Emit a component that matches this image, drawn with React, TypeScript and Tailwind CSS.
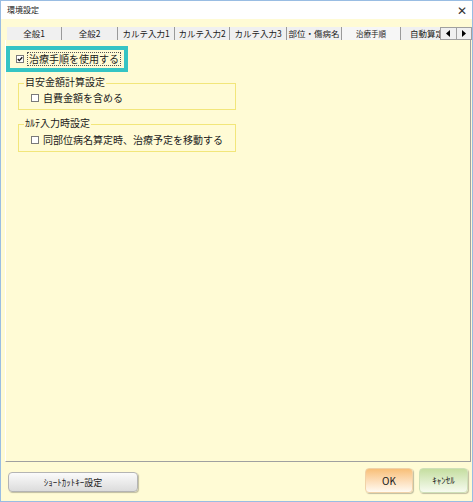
import React from 'react';

const tabs = [
    { label: '全般1', w: 'w-[55px]' },
    { label: '全般2', w: 'w-[56px]' },
    { label: 'カルテ入力1', w: 'w-[57px]' },
    { label: 'カルテ入力2', w: 'w-[55px]' },
    { label: 'カルテ入力3', w: 'w-[57px]' },
    { label: '部位・傷病名', w: 'w-[55px]' },
];

function CheckBox({ checked = false }: { checked?: boolean }) {
    return (
        <span className="w-[8px] h-[8px] border border-[#7a7a7a] bg-white flex items-center justify-center shrink-0">
            {checked && (
                <svg width="6" height="6" viewBox="0 0 6 6">
                    <polyline points="0.8,3 2.3,4.6 5.3,1.2" fill="none" stroke="#111" strokeWidth="1.3" />
                </svg>
            )}
        </span>
    );
}

export default function App() {
    return (
        <div className="w-[473px] h-[502px] border border-[#99bde3] bg-[#fffbd5] flex flex-col overflow-hidden text-[#1a1a1a] font-['Noto_Sans_CJK_JP',sans-serif]">
            {/* Title bar */}
            <div className="h-[18px] bg-white flex items-center justify-between pl-[6px] pr-[5px] shrink-0">
                <span className="text-[8px] leading-none">環境設定</span>
                <span className="text-[12px] leading-none font-light text-[#333]">✕</span>
            </div>

            {/* Tabs */}
            <div className="mt-[8px] h-[13px] flex shrink-0">
                <div className="ml-[6px] flex h-full">
                    {tabs.map((t) => (
                        <div
                            key={t.label}
                            className={`${t.w} h-full bg-[#f0f0f0] border-r border-[#9a9a9a] flex items-center justify-center text-[8.5px] leading-none whitespace-nowrap overflow-hidden`}
                        >
                            {t.label}
                        </div>
                    ))}
                    <div className="w-[59px] h-full bg-[#f6f6f6] border-r border-[#9a9a9a] flex items-center justify-center text-[7.5px] leading-none">
                        治療手順
                    </div>
                    <div className="w-[39px] h-full bg-[#f0f0f0] overflow-hidden flex items-center pl-[9px] text-[8.5px] leading-none whitespace-nowrap">
                        自動算定
                    </div>
                    <div className="w-[32px] h-full flex border border-[#a0a0a0] bg-[#f0f0f0]">
                        <div className="flex-1 flex items-center justify-center border-r border-[#a0a0a0]">
                            <svg width="5" height="7" viewBox="0 0 5 7">
                                <polygon points="4,0 0,3.5 4,7" fill="#000" />
                            </svg>
                        </div>
                        <div className="flex-1 flex items-center justify-center">
                            <svg width="5" height="7" viewBox="0 0 5 7">
                                <polygon points="1,0 5,3.5 1,7" fill="#000" />
                            </svg>
                        </div>
                    </div>
                </div>
            </div>

            {/* Panel */}
            <div className="ml-[4px] w-[466px] h-[422px] shrink-0 border-l border-l-[#ffffff] border-r border-r-[#a0a0a0] border-b border-b-[#a0a0a0] flex flex-col">
                <div className="mt-[6px] w-[122px] h-[26px] border-[4px] border-[#35c4c4] flex items-center pl-[6px] gap-[3px]">
                    <CheckBox checked />
                    <span className="text-[10px] leading-none whitespace-nowrap border border-dotted border-[#555] px-[1px] py-[1px]">
                        治療手順を使用する
                    </span>
                </div>

                <div className="ml-[12px] mt-[11px] w-[218px] h-[27px] border border-[#f2e67a] relative flex items-center pl-[12px] pt-[3px] gap-[4px]">
                    <span className="absolute left-[5px] -top-[7px] bg-[#fffbd5] px-[1px] text-[10px] leading-none">
                        目安金額計算設定
                    </span>
                    <CheckBox />
                    <span className="text-[10px] leading-none whitespace-nowrap">自費金額を含める</span>
                </div>

                <div className="ml-[12px] mt-[14px] w-[218px] h-[28px] border border-[#f2e67a] relative flex items-center pl-[12px] pt-[3px] gap-[4px]">
                    <span className="absolute left-[5px] -top-[7px] bg-[#fffbd5] px-[1px] text-[10px] leading-none">
                        ｶﾙﾃ入力時設定
                    </span>
                    <CheckBox />
                    <span className="text-[10px] leading-none whitespace-nowrap">同部位病名算定時、治療予定を移動する</span>
                </div>
            </div>

            {/* Bottom buttons */}
            <div className="flex-1 flex items-start justify-between">
                <button className="ml-[7px] mt-[10px] w-[130px] h-[20px] rounded-[4px] border border-[#b4b4b4] bg-gradient-to-b from-[#fbfbfb] to-[#dcdcdc] shadow-[1px_1px_1px_rgba(0,0,0,0.25)] text-[9px] leading-none">
                    ｼｮｰﾄｶｯﾄｷｰ設定
                </button>
                <div className="flex gap-[6px] mt-[6px] mr-[4px]">
                    <button className="w-[48px] h-[25px] rounded-[4px] border border-[#f0d2a8] bg-gradient-to-b from-[#f8bf78] to-[#fffaf2] shadow-[1px_1px_1px_rgba(0,0,0,0.25)] text-[10px] leading-none">
                        OK
                    </button>
                    <button className="w-[49px] h-[25px] rounded-[4px] border border-[#cfe0b8] bg-gradient-to-b from-[#c5dea0] to-[#f7fbf0] shadow-[1px_1px_1px_rgba(0,0,0,0.25)] text-[9px] leading-none">
                        ｷｬﾝｾﾙ
                    </button>
                </div>
            </div>
        </div>
    );
}
